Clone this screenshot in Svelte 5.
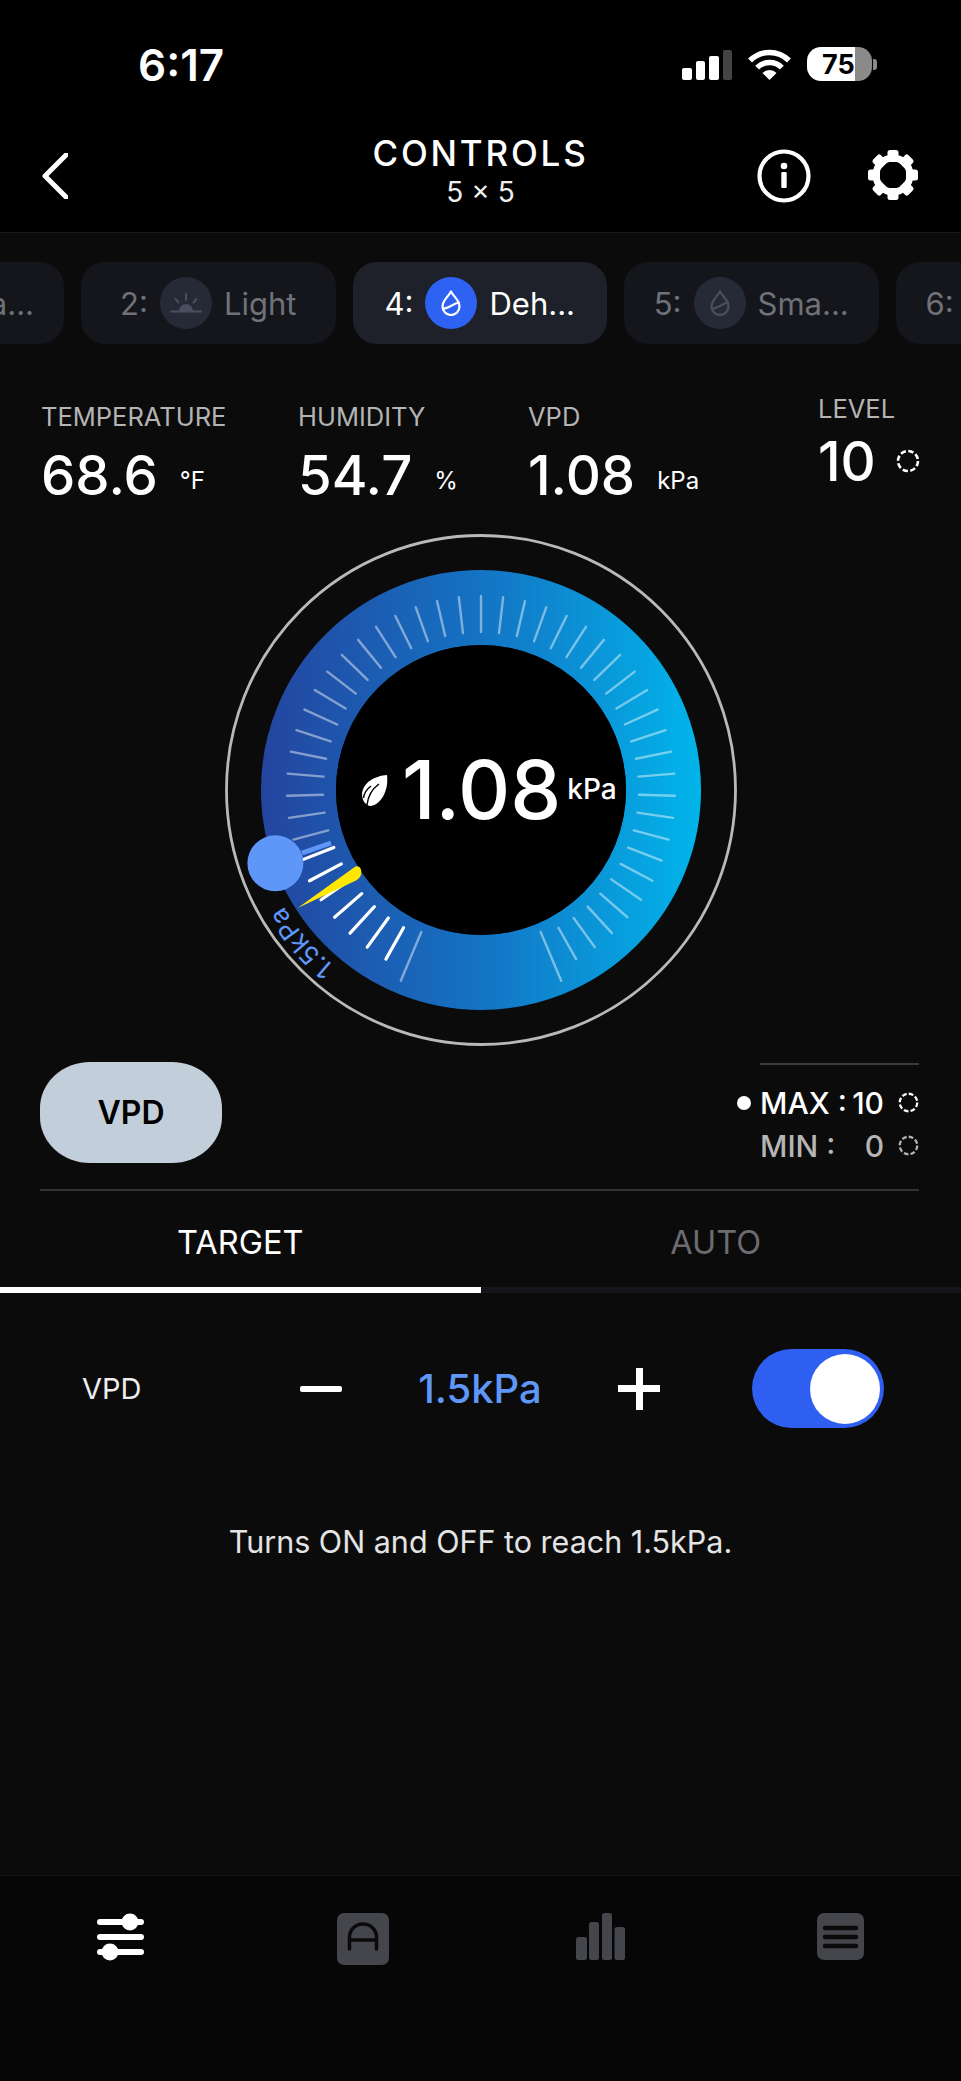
<script>
  const cx = 260;
  const cy = 260;

  // gauge ticks run from -157.2deg to +157.2deg, 0 is straight up
  const step = 6.55;
  const ticks = [];
  for (let k = -24; k <= 24; k++) {
    const a = (k * step * Math.PI) / 180;
    const end = Math.abs(k) === 24;
    const r1 = end ? 154 : 158;
    const r2 = end ? 207 : 194;
    const active = k >= -23 && k <= -17;
    ticks.push({
      x1: cx + r1 * Math.sin(a),
      y1: cy - r1 * Math.cos(a),
      x2: cx + r2 * Math.sin(a),
      y2: cy - r2 * Math.cos(a),
      active
    });
  }

  const teeth = [0, 45, 90, 135, 180, 225, 270, 315];
  const stats = [
    { label: 'TEMPERATURE', value: '68.6', unit: '°F', width: 257 },
    { label: 'HUMIDITY', value: '54.7', unit: '%', width: 230 },
    { label: 'VPD', value: '1.08', unit: 'kPa', width: 290 }
  ];

  function polar(r, deg) {
    const a = (deg * Math.PI) / 180;
    return `${cx + r * Math.sin(a)} ${cy - r * Math.cos(a)}`;
  }
  const labelArc = `M${polar(229, -140.5)} A229 229 0 0 1 ${polar(229, -100)}`;
</script>

{#snippet dashCircle(size)}
  <svg class="dash" width={size} height={size} viewBox="0 0 24 24">
    <circle cx="12" cy="12" r="10" fill="none" stroke="currentColor" stroke-width="2.600" stroke-dasharray="5.400 2.450" />
  </svg>
{/snippet}

{#snippet drop(color)}
  <svg width="20" height="26" viewBox="0 0 20 26" fill="none" stroke={color} stroke-width="2.200" stroke-linecap="round" stroke-linejoin="round">
    <path d="M10 1.500C8 6 1.500 10 1.500 16.500a8.500 8.500 0 0 0 17 0C18.500 10 12 6 10 1.500Z" />
    <path d="M2 18.500C7 19 12 13.500 18 12.500" />
  </svg>
{/snippet}

<div class="page">
  <header>
    <div class="status">
      <span class="time">6:17</span>
      <div class="status-icons">
        <div class="signal">
          <i style="height:12px"></i>
          <i style="height:19px"></i>
          <i style="height:24px"></i>
          <i class="off" style="height:30px"></i>
        </div>
        <svg width="43" height="31" viewBox="0 0 43 31" fill="none" stroke="#fff" stroke-width="5.500">
          <path d="M2.050 11.550A27.500 27.500 0 0 1 40.950 11.550" />
          <path d="M9.130 18.630A17.500 17.500 0 0 1 33.870 18.630" />
          <path d="M21.500 31L14.430 23.930A10 10 0 0 1 28.570 23.930Z" fill="#fff" stroke="none" />
        </svg>
        <div class="battery"><span>75</span></div>
        <div class="nub"></div>
      </div>
    </div>

    <div class="nav">
      <div class="nav-left">
        <svg width="26" height="46" viewBox="0 0 26 46" fill="none" stroke="#fff" stroke-width="5" stroke-linecap="round" stroke-linejoin="round">
          <path d="M24 2L3 23l21 21" />
        </svg>
      </div>
      <div class="title">
        <div class="t1">CONTROLS</div>
        <div class="t2">5 × 5</div>
      </div>
      <div class="nav-right">
        <svg width="54" height="54" viewBox="0 0 54 54" fill="none">
          <circle cx="27" cy="27" r="24.500" stroke="#fff" stroke-width="4.200" />
          <circle cx="27" cy="17" r="3.300" fill="#fff" />
          <rect x="24.300" y="23" width="5.400" height="16" rx="1" fill="#fff" />
        </svg>
        <svg width="52" height="52" viewBox="0 0 52 52">
          <g fill="#fff">
            {#each teeth as t}
              <rect x="20.500" y="1" width="11" height="12" rx="2.500" transform="rotate({t} 26 26)" />
            {/each}
          </g>
          <circle cx="26" cy="26" r="17" fill="none" stroke="#fff" stroke-width="7" />
        </svg>
      </div>
    </div>
  </header>

  <div class="devices">
    <div class="device first"><span class="dim">1:</span><span class="ic"></span><span class="dim">Fa...</span></div>
    <div class="device">
      <span class="dim">2:</span>
      <span class="ic">
        <svg width="32" height="22" viewBox="0 0 32 22" stroke="#4a4f60" stroke-width="2" stroke-linecap="round" fill="#4a4f60">
          <path d="M9 19a7 7 0 0 1 14 0Z" stroke="none" />
          <path d="M1 19.500h30M16 2v6M5.500 7l3 3.500M26.500 7l-3 3.500" fill="none" />
        </svg>
      </span>
      <span class="dim">Light</span>
    </div>
    <div class="device on">
      <span>4:</span>
      <span class="ic blue">{@render drop('#fff')}</span>
      <span>Deh...</span>
    </div>
    <div class="device">
      <span class="dim">5:</span>
      <span class="ic">{@render drop('#4a4f60')}</span>
      <span class="dim">Sma...</span>
    </div>
    <div class="device left"><span class="dim">6:</span></div>
  </div>

  <div class="stats">
    {#each stats as s}
      <div class="stat" style="width:{s.width}px">
        <div class="stat-label">{s.label}</div>
        <div class="stat-value"><span class="num">{s.value}</span><span class="unit">{s.unit}</span></div>
      </div>
    {/each}
    <div class="level">
      <div class="stat-label">LEVEL</div>
      <div class="level-value"><span class="num">10</span>{@render dashCircle(24)}</div>
    </div>
  </div>

  <div class="gauge">
    <svg width="520" height="520" viewBox="0 0 520 520">
      <defs>
        <linearGradient id="ring" gradientUnits="userSpaceOnUse" x1="40" y1="260" x2="480" y2="260">
          <stop offset="0" stop-color="#24459f" />
          <stop offset="0.5" stop-color="#1473c4" />
          <stop offset="1" stop-color="#01b5ea" />
        </linearGradient>
        <path id="labelArc" d={labelArc} />
      </defs>
      <circle cx={cx} cy={cy} r="254.500" fill="none" stroke="#b9b9b9" stroke-width="2.800" />
      <circle cx={cx} cy={cy} r="182.500" fill="none" stroke="url(#ring)" stroke-width="75" />
      <circle cx={cx} cy={cy} r="145" fill="#000" />
      {#each ticks as t}
        <line
          x1={t.x1}
          y1={t.y1}
          x2={t.x2}
          y2={t.y2}
          stroke={t.active ? '#fff' : 'rgba(255,255,255,0.45)'}
          stroke-width={t.active ? 3.200 : 2.400}
          stroke-linecap="round"
        />
      {/each}
      <line x1="81" y1="323" x2="110" y2="313" stroke="#5f97f8" stroke-width="4.500" />
      <path d="M76.700 378L133 337.500C136 335 139.500 336.500 140 340C141 344 139.500 348 135 350.500Z" fill="#ffe800" />
      <circle cx="54.400" cy="333.300" r="28" fill="#5f97f8" />
      <text class="arc-label"><textPath href="#labelArc">1.5kPa</textPath></text>
    </svg>
    <div class="reading">
      <svg width="27" height="33" viewBox="0 0 27 33">
        <path d="M26 1C14 2 2 8 1 20c0 6 3 11 8 12C20 31 28 16 26 1Z" fill="#fff" />
        <path d="M6 31C7 22 11 15 18 10M2.500 24C3 19 6 15 10 12" fill="none" stroke="#000" stroke-width="1.500" />
      </svg>
      <span class="big">1.08</span>
      <span class="big-unit">kPa</span>
    </div>
  </div>

  <div class="mode-row">
    <button class="mode">VPD</button>
    <div class="limits">
      <div class="limit">
        <span class="dot"></span>
        <span>MAX :</span>
        <span class="lim-num">10</span>
        {@render dashCircle(21)}
      </div>
      <div class="limit min">
        <span>MIN :</span>
        <span class="lim-num">0</span>
        {@render dashCircle(21)}
      </div>
    </div>
  </div>

  <div class="sep"></div>

  <div class="tabs">
    <div class="tab active">TARGET</div>
    <div class="tab second">AUTO</div>
  </div>

  <div class="control">
    <span class="control-label">VPD</span>
    <span class="minus"></span>
    <span class="target">1.5kPa</span>
    <span class="plus"></span>
    <span class="toggle"><span class="knob"></span></span>
  </div>

  <p class="desc">Turns ON and OFF to reach 1.5kPa.</p>

  <nav>
    <svg width="48" height="48" viewBox="0 0 48 48" fill="#fff">
      <rect x="0" y="6" width="47" height="6" rx="3" />
      <circle cx="33" cy="9" r="8.500" />
      <rect x="0" y="21" width="47" height="6" rx="3" />
      <rect x="0" y="36" width="47" height="6" rx="3" />
      <circle cx="13" cy="39" r="8.500" />
    </svg>
    <svg width="52" height="52" viewBox="0 0 52 52">
      <rect width="52" height="52" rx="7" fill="#44464c" />
      <path d="M12.500 36V24a13.500 13 0 0 1 27 0v12M12.500 27h27" fill="none" stroke="#0a0a0a" stroke-width="3.500" stroke-linecap="round" />
    </svg>
    <svg width="49" height="47" viewBox="0 0 49 47" fill="#44464c">
      <rect x="0" y="24" width="11" height="23" rx="2.500" />
      <rect x="13" y="9" width="10" height="38" rx="2.500" />
      <rect x="26" y="0" width="10" height="47" rx="2.500" />
      <rect x="38.500" y="14" width="10.500" height="33" rx="2.500" />
    </svg>
    <svg width="47" height="47" viewBox="0 0 47 47">
      <rect width="47" height="47" rx="7" fill="#44464c" />
      <path d="M8 15h31M8 24h31M8 33h31" stroke="#0a0a0a" stroke-width="4.500" stroke-linecap="round" />
    </svg>
  </nav>
</div>

<style>
  :global(body) {
    background: #0b0b0c;
  }

  .page {
    width: 961px;
    height: 2081px;
    display: flex;
    flex-direction: column;
    overflow: hidden;
    background: #0b0b0c;
    color: #fff;
    font-family: Inter, "Liberation Sans", sans-serif;
  }

  header {
    height: 232px;
    background: #000;
    border-bottom: 1px solid #18181a;
  }

  .status {
    display: flex;
    justify-content: space-between;
    align-items: center;
    height: 34px;
    padding: 47px 84px 0 138px;
  }

  .time {
    font-size: 44px;
    font-weight: 600;
    line-height: 34px;
    padding-top: 2px;
  }

  .status-icons {
    display: flex;
    align-items: center;
    gap: 16px;
  }

  .signal {
    display: flex;
    align-items: flex-end;
    gap: 4px;
    height: 31px;
  }

  .signal i {
    width: 9.500px;
    background: #fff;
    border-radius: 2px;
  }

  .signal i.off {
    background: #444;
  }

  .battery {
    width: 65px;
    height: 34px;
    border-radius: 14px;
    background: linear-gradient(90deg, #fff 74%, #8a8a8a 74%);
    color: #000;
    font-size: 27px;
    font-weight: 700;
    display: flex;
    align-items: center;
    padding-left: 15px;
    box-sizing: border-box;
  }

  .nub {
    width: 4px;
    height: 11px;
    margin-left: -15px;
    background: #8a8a8a;
    border-radius: 0 3px 3px 0;
  }

  .nav {
    display: grid;
    grid-template-columns: 1fr auto 1fr;
    margin-top: 50px;
  }

  .nav-left {
    padding: 22px 0 0 42px;
  }

  .title {
    text-align: center;
  }

  .t1 {
    font-size: 35px;
    font-weight: 500;
    line-height: 44px;
    letter-spacing: 2.800px;
  }

  .t2 {
    font-size: 28px;
    line-height: 30px;
    margin-top: 2px;
    color: #eee;
  }

  .nav-right {
    display: flex;
    justify-content: flex-end;
    gap: 56px;
    padding: 18px 42px 0 0;
  }

  .devices {
    display: flex;
    gap: 17px;
    margin: 29px 0 0 -190.500px;
  }

  .device {
    flex: 0 0 254.500px;
    height: 82px;
    border-radius: 24px;
    background: #14161b;
    display: flex;
    align-items: center;
    justify-content: center;
    gap: 12px;
    font-size: 31px;
    box-sizing: border-box;
  }

  .device.on {
    background: #1e2129;
  }

  .device.first {
    justify-content: flex-end;
    padding-right: 30px;
  }

  .device.left {
    justify-content: flex-start;
    padding-left: 30px;
  }

  .dim {
    color: #6f7278;
  }

  .ic {
    width: 52px;
    height: 52px;
    border-radius: 50%;
    background: #262a36;
    display: flex;
    align-items: center;
    justify-content: center;
  }

  .ic.blue {
    background: #2d62f2;
  }

  .stats {
    display: flex;
    padding-left: 41px;
    margin-top: 58px;
    height: 102px;
  }

  .stat-label {
    font-size: 25.500px;
    line-height: 30px;
    color: #b4b4b4;
  }

  .stat-value {
    display: flex;
    align-items: flex-end;
    margin-top: 13px;
  }

  .num {
    font-size: 54.500px;
    line-height: 60px;
    font-weight: 500;
  }

  .unit {
    font-size: 24px;
    line-height: 30px;
    margin: 0 0 9px 22px;
  }

  .level {
    margin-top: -8px;
  }

  .level-value {
    display: flex;
    align-items: center;
    gap: 20px;
    margin-top: 7px;
    color: #fff;
  }

  .dash {
    display: block;
    flex: none;
  }

  .gauge {
    position: relative;
    display: flex;
    justify-content: center;
    margin-top: 26px;
    height: 520px;
  }

  .reading {
    position: absolute;
    left: 361px;
    top: 212px;
    height: 96px;
    display: flex;
    align-items: center;
  }

  .big {
    font-size: 81px;
    line-height: 96px;
    margin-left: 14px;
    font-weight: 500;
  }

  .big-unit {
    font-size: 28px;
    font-weight: 500;
    margin: 0 0 3px 6px;
  }

  .arc-label {
    font-size: 26px;
    fill: #5f97f8;
    letter-spacing: 0.300px;
  }

  .mode-row {
    display: flex;
    justify-content: space-between;
    padding: 0 42px 0 40px;
    margin-top: 12px;
    height: 101px;
  }

  .mode {
    width: 182px;
    height: 101px;
    border: 0;
    border-radius: 50px / 46px;
    background: #c3cedb;
    color: #000;
    font: 600 32px Inter, "Liberation Sans", sans-serif;
  }

  .limits {
    position: relative;
    width: 159px;
    margin-top: 1px;
    padding-top: 16px;
    border-top: 2px solid #3a3a3a;
    box-sizing: content-box;
    height: 82px;
  }

  .limit {
    display: flex;
    align-items: center;
    height: 43px;
    font-size: 30px;
    font-weight: 500;
    white-space: nowrap;
  }

  .limit.min {
    color: #b5b5b5;
  }

  .lim-num {
    margin-left: auto;
    margin-right: 14px;
  }

  .dot {
    position: absolute;
    left: -23px;
    width: 14px;
    height: 14px;
    border-radius: 50%;
    background: #fff;
  }

  .sep {
    height: 2px;
    margin: 26px 42px 0 40px;
    background: #333;
  }

  .tabs {
    display: flex;
  }

  .tab {
    flex: 0 0 50%;
    box-sizing: border-box;
    padding-top: 6px;
    height: 102px;
    display: flex;
    align-items: center;
    justify-content: center;
    font-size: 32.500px;
    color: #6b6b70;
    border-bottom: 6px solid #15151c;
  }

  .tab.active {
    color: #fff;
    border-bottom-color: #fff;
  }

  .tab.second {
    padding-right: 10px;
  }

  .control {
    display: flex;
    align-items: center;
    height: 79px;
    margin-top: 56px;
    padding-left: 82px;
  }

  .control-label {
    width: 218px;
    font-size: 29px;
    color: #eee;
  }

  .minus {
    width: 42px;
    height: 6px;
    background: #fff;
    border-radius: 2px;
  }

  .target {
    width: 276px;
    text-align: center;
    font-size: 40px;
    font-weight: 500;
    color: #5f97f8;
  }

  .plus {
    width: 42px;
    height: 42px;
    background:
      linear-gradient(#fff, #fff) center / 100% 7px no-repeat,
      linear-gradient(#fff, #fff) center / 7px 100% no-repeat;
  }

  .toggle {
    width: 132px;
    height: 79px;
    margin-left: 92px;
    border-radius: 40px;
    background: #2e5ff0;
    display: flex;
    align-items: center;
    justify-content: flex-end;
    padding-right: 4px;
    box-sizing: border-box;
  }

  .knob {
    width: 70px;
    height: 70px;
    border-radius: 50%;
    background: #fff;
  }

  .desc {
    margin: 94px 0 0;
    text-align: center;
    font-size: 30.500px;
    line-height: 40px;
    color: #e4e4e4;
  }

  nav {
    margin-top: auto;
    height: 206px;
    border-top: 1px solid #141415;
    background: #060606;
    display: grid;
    grid-template-columns: 240px 239px 241px auto;
    align-items: start;
    padding: 37px 0 0 97px;
    box-sizing: border-box;
  }
</style>
